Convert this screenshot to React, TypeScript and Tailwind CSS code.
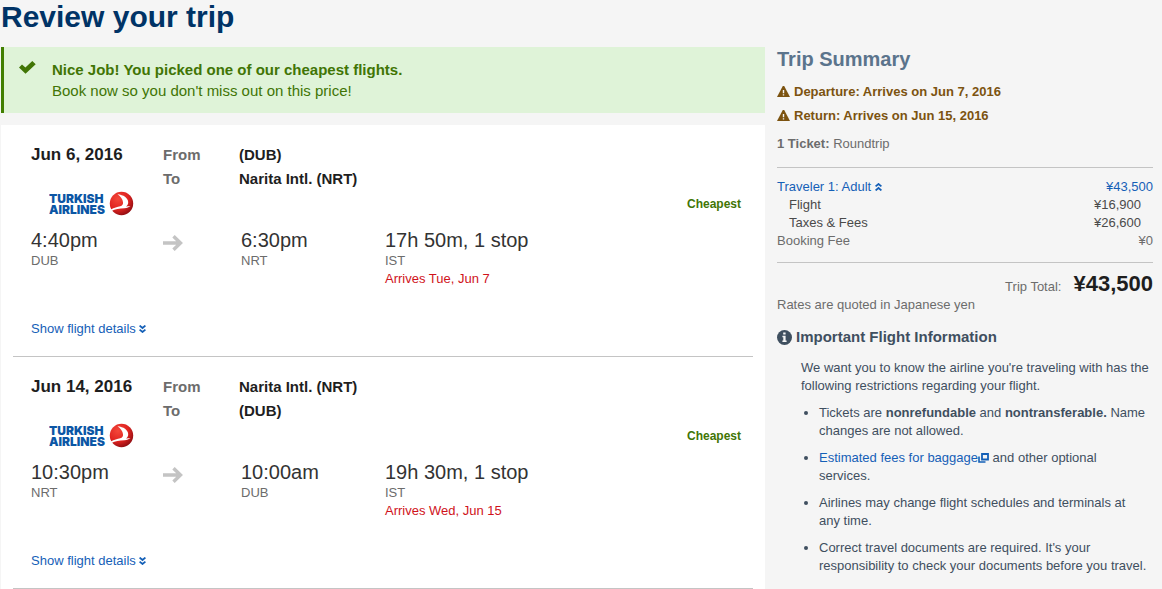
import React, { useState } from 'react';

type Leg = {
  date: string;
  from: string;
  to: string;
  departs: string;
  departsCode: string;
  arrives: string;
  arrivesCode: string;
  duration: string;
  stopCode: string;
  note: string;
};

const legs: Leg[] = [
  {
    date: 'Jun 6, 2016',
    from: '(DUB)',
    to: 'Narita Intl. (NRT)',
    departs: '4:40pm',
    departsCode: 'DUB',
    arrives: '6:30pm',
    arrivesCode: 'NRT',
    duration: '17h 50m, 1 stop',
    stopCode: 'IST',
    note: 'Arrives Tue, Jun 7',
  },
  {
    date: 'Jun 14, 2016',
    from: 'Narita Intl. (NRT)',
    to: '(DUB)',
    departs: '10:30pm',
    departsCode: 'NRT',
    arrives: '10:00am',
    arrivesCode: 'DUB',
    duration: '19h 30m, 1 stop',
    stopCode: 'IST',
    note: 'Arrives Wed, Jun 15',
  },
];

const CheckIcon = () => (
  <svg className="h-[13px] w-[17px]" viewBox="0 0 17 13" fill="currentColor" aria-hidden="true">
    <path d="M0 6.5 3 3.5l3.400 3.100L13.300 0l3.400 3.300L6.500 12.800z" />
  </svg>
);

const ArrowIcon = () => (
  <svg className="h-4 w-5" viewBox="0 0 20 16" fill="none" stroke="#c4c4c4" strokeWidth="3.4" aria-hidden="true">
    <path d="M0 8h17M10.5 1.200 17.500 8l-7 6.800" />
  </svg>
);

const DoubleChevron = ({ up = false }: { up?: boolean }) => (
  <svg
    className={up ? 'inline-block h-2 w-[7px] rotate-180 align-baseline' : 'inline-block h-2 w-[7px] align-baseline'}
    viewBox="0 0 7 8"
    fill="none"
    stroke="currentColor"
    strokeWidth="1.8"
    aria-hidden="true"
  >
    <path d="M.6.6 3.5 3 6.4.6M.6 4.6 3.5 7l2.9-2.4" />
  </svg>
);

const WarningIcon = () => (
  <svg className="h-3 w-[13px] shrink-0" viewBox="0 0 13 12" aria-hidden="true">
    <path d="M5.8 0h1.400L13 11H0z" fill="currentColor" />
    <path d="M5.800 4h1.400v3.300H5.800zM5.800 8.200h1.400v1.300H5.800z" fill="#f5f5f5" />
  </svg>
);

const InfoIcon = () => (
  <svg className="h-[15px] w-[15px] shrink-0" viewBox="0 0 15 15" aria-hidden="true">
    <circle cx="7.5" cy="7.5" r="7.5" fill="currentColor" />
    <path d="M6.2 2.6h2.400v2H6.200zM5.400 5.800h3.200v4.800h1v1.400H5.400v-1.400h.9V7.200h-.9z" fill="#f5f5f5" />
  </svg>
);

const PopupIcon = () => (
  <svg className="inline-block h-[10px] w-[11px] align-[-1px]" viewBox="0 0 11 10" fill="none" stroke="currentColor" aria-hidden="true">
    <path d="M4 1h6v5.5H4z" strokeWidth="1.8" />
    <path d="M1 3.5V9h6.5" strokeWidth="1.6" />
  </svg>
);

const AirlineLogo = () => (
  <svg className="h-[26px] w-[86px]" viewBox="0 0 86 26" role="img" aria-label="Turkish Airlines">
    <defs>
      <radialGradient id="ball" cx="35%" cy="30%" r="75%">
        <stop offset="0" stopColor="#f4473a" />
        <stop offset="0.6" stopColor="#df2320" />
        <stop offset="1" stopColor="#8e0d12" />
      </radialGradient>
    </defs>
    <g fill="#0b56a5" fontFamily="Inter, sans-serif" fontSize="12" fontWeight="900">
      <text x="0" y="12">TURKISH</text>
      <text x="0" y="23">AIRLINES</text>
    </g>
    <circle cx="72.5" cy="12.5" r="11.7" fill="url(#ball)" />
    <path
      d="M68.500 3.200c6 .6 10.500 3.600 10.700 7.800.1 2.400-.9 3.700-2.200 4.400l4.500-.4c-1.500 1.200-3.500 2-6 2.300-5.500.4-9 .7-13 2.700l-.6-1.400c3.200-1.900 6.500-2.700 9.300-3.300 2.200-.6 3-2 2.800-4.100-.3-3-2.300-6-5.500-8z"
      fill="#fff"
    />
  </svg>
);

const FlightLeg = ({ leg }: { leg: Leg }) => {
  const [open, setOpen] = useState(false);

  return (
    <section className="mx-3 border-b border-[#c4c4c4] pt-[18px] pr-3 pb-[18px] pl-[18px]">
      <div className="grid h-[86px] grid-cols-[132px_76px_1fr_auto] text-[15px] leading-6 font-bold text-[#1e1e1e]">
        <div>
          <h2 className="text-[17px] leading-6">{leg.date}</h2>
          <div className="mt-6 pl-[18px]">
            <AirlineLogo />
          </div>
        </div>
        <div className="text-[#6c6c6c]">
          <p>From</p>
          <p>To</p>
        </div>
        <div>
          <p>{leg.from}</p>
          <p>{leg.to}</p>
        </div>
        <p className="pt-[49px] text-xs leading-6 text-[#417505]">Cheapest</p>
      </div>

      <div className="grid min-h-[72px] grid-cols-[132px_78px_144px_1fr] text-[13px] leading-[18px] text-[#6c6c6c]">
        <div>
          <p className="text-xl leading-[23px] text-[#333]">{leg.departs}</p>
          <p>{leg.departsCode}</p>
        </div>
        <div className="pt-[6px]">
          <ArrowIcon />
        </div>
        <div>
          <p className="text-xl leading-[23px] text-[#333]">{leg.arrives}</p>
          <p>{leg.arrivesCode}</p>
        </div>
        <div>
          <p className="text-xl leading-[23px] text-[#333]">{leg.duration}</p>
          <p>{leg.stopCode}</p>
          <p className="text-[#d0131b]">{leg.note}</p>
        </div>
      </div>

      <button
        type="button"
        aria-expanded={open}
        onClick={() => setOpen(!open)}
        className="mt-[19px] block text-[13px] leading-[18px] text-[#1560b7]"
      >
        Show flight details <DoubleChevron up={open} />
      </button>
    </section>
  );
};

const TripSummary = () => {
  const [showFees, setShowFees] = useState(true);

  return (
    <aside className="w-[376px] shrink-0 text-[13px] leading-[18px] text-[#6c6c6c]">
      <h2 className="text-xl leading-6 font-bold text-[#5b748c]">Trip Summary</h2>
      <div className="mt-[9px] leading-6 font-bold text-[#7c5310]">
        <p className="flex items-center gap-1">
          <WarningIcon /> Departure: Arrives on Jun 7, 2016
        </p>
        <p className="flex items-center gap-1">
          <WarningIcon /> Return: Arrives on Jun 15, 2016
        </p>
      </div>
      <p className="mt-[7px]">
        <b>1 Ticket:</b> Roundtrip
      </p>

      <div className="mt-[14px] border-y border-[#c4c4c4] pt-[10px] pb-3">
        <div className="flex justify-between text-[#1560b7]">
          <button type="button" aria-expanded={showFees} onClick={() => setShowFees(!showFees)}>
            Traveler 1: Adult <DoubleChevron up={showFees} />
          </button>
          <span>¥43,500</span>
        </div>
        {showFees && (
          <div className="px-3 text-[#4a4a4a]">
            <p className="flex justify-between"><span>Flight</span><span>¥16,900</span></p>
            <p className="flex justify-between"><span>Taxes &amp; Fees</span><span>¥26,600</span></p>
          </div>
        )}
        <p className="flex justify-between"><span>Booking Fee</span><span>¥0</span></p>
      </div>

      <p className="mt-[9px] flex items-baseline justify-end gap-3">
        Trip Total:
        <strong className="text-[22px] leading-6 text-[#1e1e1e]">¥43,500</strong>
      </p>
      <p>Rates are quoted in Japanese yen</p>

      <div className="mt-[13px] text-[#3f4f5f]">
        <h3 className="flex items-center gap-1 text-[15px] leading-[20px] font-bold">
          <InfoIcon /> Important Flight Information
        </h3>
        <p className="mt-3 pl-6">
          We want you to know the airline you're traveling with has the following restrictions regarding your flight.
        </p>
        <ul className="mt-[9px] list-disc space-y-[9px] pr-1 pl-[42px]">
          <li>
            Tickets are <b>nonrefundable</b> and <b>nontransferable.</b> Name changes are not allowed.
          </li>
          <li>
            <a href="#baggage" className="text-[#1560b7]">Estimated fees for baggage<PopupIcon /></a> and other optional services.
          </li>
          <li>Airlines may change flight schedules and terminals at any time.</li>
          <li>Correct travel documents are required. It's your responsibility to check your documents before you travel.</li>
        </ul>
      </div>
    </aside>
  );
};

const App: React.FC = () => {
  return (
    <div className="min-h-screen bg-[#f5f5f5] pr-[9px] pl-px font-['Liberation_Sans',Arial,sans-serif]">
      <h1 className="text-3xl leading-[34px] font-bold text-[#003366]">Review your trip</h1>
      <div className="mt-[13px] flex gap-3">
        <main className="min-w-0 flex-1">
          <div className="flex gap-4 border-l-3 border-[#417e00] bg-[#dff3d8] pt-3 pb-3 pl-[15px] text-[15px] leading-[21px] text-[#417505]">
            <div className="pt-[2px]">
              <CheckIcon />
            </div>
            <div>
              <p className="font-bold">Nice Job! You picked one of our cheapest flights.</p>
              <p>Book now so you don't miss out on this price!</p>
            </div>
          </div>
          <div className="mt-3 bg-white">
            {legs.map((leg) => (
              <FlightLeg key={leg.date} leg={leg} />
            ))}
          </div>
        </main>
        <TripSummary />
      </div>
    </div>
  );
};

export default App;
